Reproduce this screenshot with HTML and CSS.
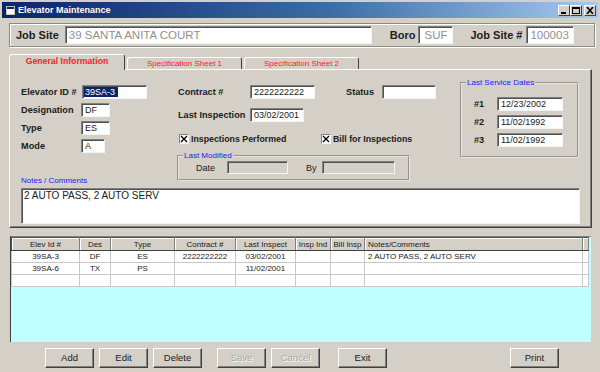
FILE: index.html
```html
<!DOCTYPE HTML>
<html>
<head>
	<meta charset="UTF-8">
	<title>Elevator Maintenance</title>
	<link rel="stylesheet" href="styles.css">
</head>
<body>

<div class="window">

	<div class="titlebar">
		<svg class="app-icon" width="9" height="9" viewBox="0 0 9 9">
			<rect x="0.5" y="0.5" width="8" height="8" fill="#fff" stroke="#c0c0c0"/>
			<rect x="1" y="1" width="7" height="2" fill="#0a246a"/>
		</svg>
		<span class="title">Elevator Maintenance</span>
		<div class="controls">
			<span class="ctl"><svg width="8" height="7" viewBox="0 0 8 7"><rect x="1" y="5" width="5" height="2" fill="#000"/></svg></span>
			<span class="ctl"><svg width="8" height="7" viewBox="0 0 8 7"><rect x="0.5" y="0.5" width="7" height="6" fill="none" stroke="#000"/><rect x="0" y="0" width="8" height="2" fill="#000"/></svg></span>
			<span class="ctl close"><svg width="8" height="7" viewBox="0 0 8 7"><path d="M1 0 L7 7 M7 0 L1 7" stroke="#000" stroke-width="1.6"/></svg></span>
		</div>
	</div>

	<div class="jobsite">
		<span class="lbl-big">Job Site</span>
		<div class="field big site">39 SANTA ANITA COURT</div>
		<span class="lbl-big boro-lbl">Boro</span>
		<div class="field big boro">SUF</div>
		<span class="lbl-big siteno-lbl">Job Site #</span>
		<div class="field big siteno">100003</div>
	</div>

	<div class="tabs">
		<div class="tab active">General Information</div>
		<div class="tab">Specification Sheet 1</div>
		<div class="tab">Specification Sheet 2</div>
	</div>

	<div class="panel">
		<div class="top">

			<div class="col-left">
				<div class="row">
					<span class="lbl w61">Elevator ID #</span>
					<div class="field id"><span class="sel">39SA-3</span></div>
				</div>
				<div class="row gap4">
					<span class="lbl w60">Designation</span>
					<div class="field w29">DF</div>
				</div>
				<div class="row gap4">
					<span class="lbl w60">Type</span>
					<div class="field w29">ES</div>
				</div>
				<div class="row gap4">
					<span class="lbl w60">Mode</span>
					<div class="field w24">A</div>
				</div>
				<span class="notes-lbl">Notes / Comments</span>
			</div>

			<div class="col-mid">
				<div class="row">
					<span class="lbl w72">Contract #</span>
					<div class="field w65">2222222222</div>
					<span class="lbl status-lbl">Status</span>
					<div class="field w54"></div>
				</div>
				<div class="row gap9">
					<span class="lbl w72">Last Inspection</span>
					<div class="field w54">03/02/2001</div>
				</div>
				<div class="checks">
					<label class="check first">
						<span class="box"><svg width="8" height="8" viewBox="0 0 8 8"><path d="M1 1 L7 7 M7 1 L1 7" stroke="#000" stroke-width="1.4"/></svg></span>
						Inspections Performed
					</label>
					<label class="check">
						<span class="box"><svg width="8" height="8" viewBox="0 0 8 8"><path d="M1 1 L7 7 M7 1 L1 7" stroke="#000" stroke-width="1.4"/></svg></span>
						Bill for Inspections
					</label>
				</div>
				<fieldset class="group modified">
					<legend>Last Modified</legend>
					<span class="small-lbl">Date</span>
					<div class="field grey w61"></div>
					<span class="small-lbl by">By</span>
					<div class="field grey w73"></div>
				</fieldset>
			</div>

			<fieldset class="group service">
				<legend>Last Service Dates</legend>
				<div class="row">
					<span class="lbl w23">#1</span>
					<div class="field w66">12/23/2002</div>
				</div>
				<div class="row gap4">
					<span class="lbl w23">#2</span>
					<div class="field w66">11/02/1992</div>
				</div>
				<div class="row gap4">
					<span class="lbl w23">#3</span>
					<div class="field w66">11/02/1992</div>
				</div>
			</fieldset>

		</div>

		<div class="field notes">2 AUTO PASS, 2 AUTO SERV</div>
	</div>

	<div class="list">
		<table class="grid">
			<tr>
				<th class="c1">Elev Id #</th>
				<th class="c2">Des</th>
				<th class="c3">Type</th>
				<th class="c4">Contract #</th>
				<th class="c5">Last Inspect</th>
				<th class="c6">Insp Ind</th>
				<th class="c7">Bill Insp</th>
				<th class="c8 left">Notes/Comments</th>
				<th class="c9"></th>
			</tr>
			<tr>
				<td>39SA-3</td><td>DF</td><td>ES</td><td>2222222222</td><td>03/02/2001</td><td></td><td></td><td class="left">2 AUTO PASS, 2 AUTO SERV</td><td></td>
			</tr>
			<tr>
				<td>39SA-6</td><td>TX</td><td>PS</td><td></td><td>11/02/2001</td><td></td><td></td><td></td><td></td>
			</tr>
			<tr>
				<td></td><td></td><td></td><td></td><td></td><td></td><td></td><td></td><td></td>
			</tr>
		</table>
	</div>

	<div class="buttons">
		<span class="button">Add</span>
		<span class="button">Edit</span>
		<span class="button">Delete</span>
		<span class="button disabled apart">Save</span>
		<span class="button disabled">Cancel</span>
		<span class="button exit">Exit</span>
		<span class="button print">Print</span>
	</div>

</div>

</body>
</html>
```

FILE: styles.css
```css
body {
	margin: 0;
	width: 600px;
	height: 372px;
	overflow: hidden;
	background-color: #d4d0c8;
	font-family: "Liberation Sans", Arial, sans-serif;
	color: #000;
}

.window {
	padding-top: 2px;
}

/* title bar */

.titlebar {
	display: flex;
	align-items: center;
	height: 16px;
	margin: 0 2px;
	padding-left: 4px;
	background: linear-gradient(to right, #0a246a, #3a6ea5 55%, #a6caf0);
}

.app-icon {
	margin-right: 3px;
}

.title {
	color: #fff;
	font-weight: bold;
	font-size: 9px;
}

.controls {
	display: flex;
	margin-left: auto;
	padding-right: 2px;
}

.ctl {
	box-sizing: border-box;
	display: flex;
	align-items: center;
	justify-content: center;
	width: 12px;
	height: 11px;
	background: #d4d0c8;
	border: 1px solid;
	border-color: #fff #404040 #404040 #fff;
}

.ctl.close {
	margin-left: 2px;
}

/* job site row */

.jobsite {
	display: flex;
	align-items: center;
	box-sizing: border-box;
	height: 24px;
	margin: 5px 5px 0 9px;
	padding-left: 6px;
	border: 1px solid #8c8a84;
	box-shadow: inset 1px 1px #fff, 1px 1px #fff;
}

.lbl-big {
	font-weight: bold;
	font-size: 11px;
	color: #202020;
}

.boro-lbl {
	margin-left: 18px;
	margin-right: 3px;
}

.siteno-lbl {
	margin-left: 17px;
	margin-right: 4px;
}

/* inputs */

.field {
	box-sizing: border-box;
	height: 14px;
	background: #fff;
	border: 1px solid;
	border-color: #808080 #f4f4f4 #f4f4f4 #808080;
	box-shadow: inset 1px 1px #505050;
	font-size: 9px;
	line-height: 12px;
	padding-left: 3px;
	white-space: nowrap;
	overflow: hidden;
	color: #202020;
}

.field.big {
	height: 18px;
	font-size: 11.5px;
	line-height: 16px;
	color: #909090;
}

.site {
	width: 307px;
	margin-left: 6px;
}

.boro {
	width: 35px;
	padding-left: 5px;
}

.siteno {
	width: 48px;
	padding-left: 3px;
	font-size: 11px;
}

.field.grey {
	height: 13px;
	background: #d4d0c8;
}

.sel {
	background: #0a246a;
	color: #fff;
	padding: 0 3px 0 1px;
	margin-left: -2px;
}

/* tabs */

.tabs {
	display: flex;
	align-items: flex-end;
	height: 14px;
	margin-top: 8px;
	padding-left: 9px;
}

.tab {
	box-sizing: border-box;
	width: 115px;
	height: 12px;
	margin-right: 2px;
	border: 1px solid;
	border-bottom: none;
	border-color: #fff #404040 #404040 #fff;
	border-radius: 3px 3px 0 0;
	color: #ff2020;
	font-size: 8px;
	line-height: 11px;
	text-align: center;
}

.tab.active {
	position: relative;
	z-index: 1;
	width: 116px;
	height: 16px;
	margin-bottom: -1px;
	margin-right: 2px;
	background: #d4d0c8;
	font-weight: bold;
	font-size: 8.7px;
	line-height: 13px;
}

/* tab panel */

.panel {
	box-sizing: border-box;
	width: 583px;
	height: 159px;
	margin-left: 9px;
	padding: 12px 0 0 11px;
	border: 1px solid;
	border-color: #fff #404040 #404040 #fff;
	box-shadow: inset -1px -1px #808080;
}

.top {
	display: flex;
	align-items: flex-start;
}

.row {
	display: flex;
	align-items: center;
	height: 14px;
}

.gap4 {
	margin-top: 4px;
}

.gap9 {
	margin-top: 9px;
}

.lbl {
	font-weight: bold;
	font-size: 9.2px;
	color: #202020;
	white-space: nowrap;
}

.w23 { width: 23px; }
.w24 { width: 24px; }
.w29 { width: 29px; }
.w54 { width: 54px; }
.w60 { width: 60px; }
.w61 { width: 61px; }
.w65 { width: 65px; }
.w66 { width: 66px; }
.w72 { width: 72px; }
.w73 { width: 73px; }

.id {
	width: 65px;
}

.col-left {
	display: flex;
	flex-direction: column;
	align-self: stretch;
	width: 157px;
	padding-top: 3px;
}

.notes-lbl {
	margin-top: auto;
	color: #1a1aff;
	font-size: 8px;
	line-height: 9px;
}

.col-mid {
	width: 282px;
	padding-top: 3px;
}

.status-lbl {
	width: 36px;
	margin-left: 31px;
}

.checks {
	display: flex;
	margin-top: 12px;
	height: 10px;
}

.check {
	display: flex;
	align-items: center;
	font-weight: bold;
	font-size: 8.8px;
	color: #202020;
}

.check.first {
	width: 142px;
	margin-left: 1px;
}

.box {
	box-sizing: border-box;
	display: flex;
	align-items: center;
	justify-content: center;
	width: 10px;
	height: 10px;
	margin-right: 2px;
	background: #fff;
	border: 1px solid;
	border-color: #808080 #f4f4f4 #f4f4f4 #808080;
}

/* group boxes */

.group {
	box-sizing: border-box;
	margin: 0;
	border: 2px groove #e8e6e0;
	padding: 0;
}

.group legend {
	padding: 0 1px;
	color: #1a1aff;
	font-size: 8px;
	line-height: 9px;
}

.modified {
	display: flex;
	align-items: center;
	width: 233px;
	height: 30px;
	margin: 7px 0 4px -1px;
	padding: 0 0 4px 17px;
}

.modified legend {
	margin-left: -13px;
}

.small-lbl {
	font-size: 9px;
	color: #202020;
	margin-right: 12px;
}

.small-lbl.by {
	margin-left: 18px;
	margin-right: 5px;
}

.service {
	width: 119px;
	margin-top: -4px;
	padding: 10px 0 9px 12px;
}

.service legend {
	margin-left: -8px;
}

.notes {
	width: 559px;
	height: 36px;
	margin-top: 3px;
	font-size: 10px;
	line-height: 14px;
	padding-left: 2px;
}

/* list */

.list {
	box-sizing: border-box;
	width: 581px;
	height: 106px;
	margin: 8px 0 0 10px;
	background: #bfffff;
	border-top: 1px solid #808080;
	border-left: 1px solid #404040;
}

.grid {
	border-collapse: collapse;
	width: 566px;
	table-layout: fixed;
	font-size: 8px;
	color: #202020;
	background: #fff;
	border: 1px solid #505050;
}

.grid th {
	height: 12px;
	padding: 0;
	font-weight: normal;
	background: #d4d0c8;
	border-right: 1px solid #808080;
	border-bottom: 1px solid #404040;
	box-shadow: inset 1px 1px #fff;
	white-space: nowrap;
}

.grid td {
	height: 11px;
	padding: 0;
	text-align: center;
	border: 1px solid #c8c8c8;
	white-space: nowrap;
}

.grid .left {
	text-align: left;
	padding-left: 3px;
}

.c1 { width: 67px; }
.c2 { width: 30px; }
.c3 { width: 63px; }
.c4 { width: 60px; }
.c5 { width: 59px; }
.c6 { width: 34px; }
.c7 { width: 33px; }
.c8 { width: 214px; }
.c9 { width: 5px; }

/* buttons */

.buttons {
	display: flex;
	margin-top: 6px;
	padding-left: 45px;
}

.button {
	box-sizing: border-box;
	width: 49px;
	height: 20px;
	margin-right: 5px;
	background: #d4d0c8;
	border: 1px solid;
	border-color: #fff #404040 #404040 #fff;
	box-shadow: inset -1px -1px #808080;
	font-size: 9.5px;
	line-height: 18px;
	text-align: center;
	color: #202020;
}

.button.disabled {
	color: #a8a6a0;
	text-shadow: 1px 1px #fff;
}

.button.apart {
	margin-left: 10px;
}

.button.exit {
	margin-left: 13px;
}

.button.print {
	margin-left: 118px;
}
```
